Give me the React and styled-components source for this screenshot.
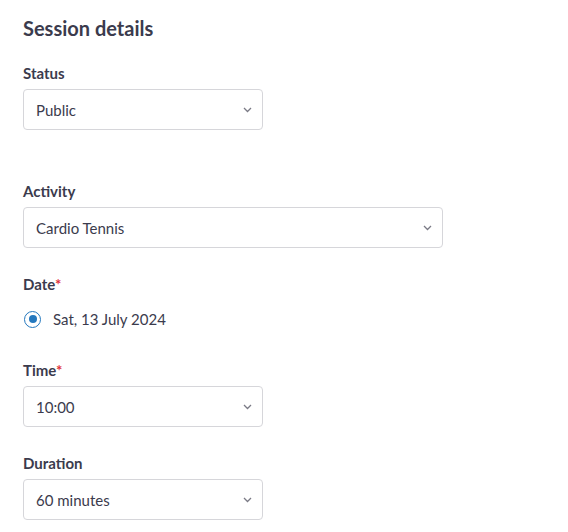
import React, { useState } from "react";
import styled, { createGlobalStyle } from "styled-components";

const GlobalStyle = createGlobalStyle`
  body {
    margin: 0;
    background: #ffffff;
    font-family: Lato, "Open Sans", sans-serif;
    color: #3b3b4d;
  }
`;

const Page = styled.div`
  padding: 14px 23px 0;
`;

const Title = styled.h2`
  font-size: 20px;
  font-weight: 700;
  line-height: 28px;
  margin: 0 0 21px;
  color: #3b3b4d;
`;

const Field = styled.div`
  display: flex;
  flex-direction: column;
  margin-bottom: ${(p) => p.$gap || 22}px;
`;

const Label = styled.label`
  font-size: 15px;
  font-weight: 700;
  line-height: 20px;
  margin-bottom: 6px;
  color: #3b3b4d;
`;

const Required = styled.span`
  color: #e0323c;
`;

const SelectWrap = styled.div`
  position: relative;
  width: ${(p) => p.$width}px;
`;

const Select = styled.select`
  appearance: none;
  width: 100%;
  height: 41px;
  box-sizing: border-box;
  border: 1px solid #d6d6da;
  border-radius: 4px;
  background: #fff;
  padding: 0 30px 0 12px;
  font-family: Lato, "Open Sans", sans-serif;
  font-size: 15px;
  color: #3b3b4d;
  outline: none;
`;

const Chevron = styled.svg`
  position: absolute;
  right: 11px;
  top: 18px;
  pointer-events: none;
`;

const RadioRow = styled.label`
  display: flex;
  align-items: center;
  gap: 12px;
  font-size: 15px;
  color: #3b3b4d;
  margin-top: 10px;
  padding-left: 1px;
`;

const RadioCircle = styled.span`
  width: 17px;
  height: 17px;
  box-sizing: border-box;
  border: 1.5px solid #2478be;
  border-radius: 50%;
  display: flex;
  align-items: center;
  justify-content: center;

  &::after {
    content: "";
    width: 8px;
    height: 8px;
    border-radius: 50%;
    background: #2478be;
  }
`;

const Dropdown = ({ width, value, options, onChange }) => (
  <SelectWrap $width={width}>
    <Select value={value} onChange={onChange}>
      {options.map((o) => (
        <option key={o}>{o}</option>
      ))}
    </Select>
    <Chevron width="9" height="6" viewBox="0 0 9 6">
      <path d="M1 1l3.5 3.5L8 1" fill="none" stroke="#7a7a85" strokeWidth="1.3" />
    </Chevron>
  </SelectWrap>
);

const App = () => {
  const [form, setForm] = useState({
    status: "Public",
    activity: "Cardio Tennis",
    time: "10:00",
    duration: "60 minutes",
  });

  const set = (name) => (e) => setForm((prev) => ({ ...prev, [name]: e.target.value }));

  return (
    <>
      <GlobalStyle />
      <Page>
        <Title>Session details</Title>

        <Field $gap={51}>
          <Label>Status</Label>
          <Dropdown width={240} value={form.status} options={["Public", "Private"]} onChange={set("status")} />
        </Field>

        <Field $gap={26}>
          <Label>Activity</Label>
          <Dropdown
            width={420}
            value={form.activity}
            options={["Cardio Tennis", "Coaching", "Social Play"]}
            onChange={set("activity")}
          />
        </Field>

        <Field $gap={32}>
          <Label>
            Date<Required>*</Required>
          </Label>
          <RadioRow>
            <RadioCircle />
            Sat, 13 July 2024
          </RadioRow>
        </Field>

        <Field $gap={26}>
          <Label>
            Time<Required>*</Required>
          </Label>
          <Dropdown width={240} value={form.time} options={["09:00", "10:00", "11:00"]} onChange={set("time")} />
        </Field>

        <Field>
          <Label>Duration</Label>
          <Dropdown
            width={240}
            value={form.duration}
            options={["30 minutes", "60 minutes", "90 minutes"]}
            onChange={set("duration")}
          />
        </Field>
      </Page>
    </>
  );
};

export default App;
